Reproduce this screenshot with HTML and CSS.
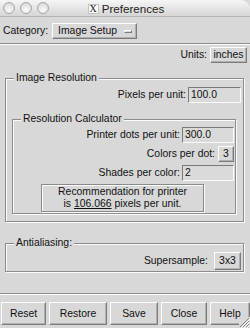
FILE: index.html
```html
<!DOCTYPE html>
<html>
<head>
<meta charset="utf-8">
<title>Preferences</title>
<link rel="stylesheet" href="styles.css">
</head>
<body>
<div class="window">
  <div class="titlebar">
    <div class="lights"><span class="light"></span><span class="light"></span><span class="light"></span></div>
    <div class="title"><span class="xlogo">X</span><span class="title-text">Preferences</span></div>
  </div>

  <div class="row category-row">
    <span class="label">Category:</span>
    <button class="btn option"><span>Image Setup</span><span class="indicator"></span></button>
  </div>

  <div class="sep"></div>

  <div class="row right units-row">
    <span class="label">Units:</span>
    <button class="btn units-btn">inches</button>
  </div>

  <fieldset class="group outer-group">
    <legend>Image Resolution</legend>
    <div class="row right field-row">
      <span class="label">Pixels per unit:</span>
      <span class="entry wide">100.0</span>
    </div>

    <fieldset class="group calc-group">
      <legend>Resolution Calculator</legend>
      <div class="row right field-row first">
        <span class="label">Printer dots per unit:</span>
        <span class="entry">300.0</span>
      </div>
      <div class="row right field-row">
        <span class="label">Colors per dot:</span>
        <button class="btn small-btn">3</button>
      </div>
      <div class="row right field-row">
        <span class="label">Shades per color:</span>
        <span class="entry">2</span>
      </div>
      <div class="recommend">
        <div>Recommendation for printer</div>
        <div>is <u>106.066</u> pixels per unit.</div>
      </div>
    </fieldset>
  </fieldset>

  <fieldset class="group aa-group">
    <legend>Antialiasing:</legend>
    <div class="row right field-row">
      <span class="label">Supersample:</span>
      <button class="btn ss-btn">3x3</button>
    </div>
  </fieldset>

  <div class="sep bottom-sep"></div>

  <div class="button-row">
    <button class="btn action b-reset">Reset</button>
    <button class="btn action b-restore">Restore</button>
    <button class="btn action b-save">Save</button>
    <button class="btn action b-close">Close</button>
    <button class="btn action b-help">Help</button>
  </div>

  <svg class="grip" width="11" height="11" viewBox="0 0 11 11">
    <path d="M10 1 L1 10 M10 4 L4 10 M10 7 L7 10" stroke="#8a8a8a" stroke-width="1"/>
    <path d="M11 2 L2 11 M11 5 L5 11 M11 8 L8 11" stroke="#ffffff" stroke-width="1"/>
  </svg>
</div>
</body>
</html>
```

FILE: styles.css
```css
html, body {
  margin: 0;
  padding: 0;
  background: #d8d8d8;
}

.window {
  position: relative;
  width: 250px;
  height: 328px;
  background: #d8d8d8;
  font-family: "Liberation Sans", Arial, Helvetica, sans-serif;
  font-size: 10.4px;
  line-height: 12px;
  color: #111;
  overflow: hidden;
  display: flex;
  flex-direction: column;
}

/* title bar */
.titlebar {
  position: relative;
  height: 16px;
  border-bottom: 1px solid #b4b4b4;
  background: linear-gradient(#f6f6f6, #e2e2e2 60%, #d6d6d6);
  border-top-right-radius: 9px;
  display: flex;
  align-items: center;
  justify-content: center;
}

.lights {
  position: absolute;
  left: 3px;
  top: 2px;
  display: flex;
  gap: 5px;
}

.light {
  width: 10px;
  height: 10px;
  border-radius: 50%;
  border: 1px solid #a6a6a6;
  background: radial-gradient(circle at 50% 70%, #fbfbfb, #dedede 70%, #cfcfcf);
}

.title {
  display: flex;
  align-items: center;
  gap: 3px;
  margin-left: 2px;
  margin-top: 1px;
}

.xlogo {
  width: 9px;
  height: 8px;
  border: 1px solid #c4c4c4;
  background: #fafafa;
  font-family: "Liberation Serif", "Times New Roman", serif;
  font-size: 10px;
  line-height: 8px;
  text-align: center;
  color: #222;
}

.title-text {
  font-size: 11.6px;
  color: #222;
}

/* rows */
.row {
  display: flex;
  align-items: center;
}

.row.right {
  justify-content: flex-end;
}

.label {
  white-space: nowrap;
}

.category-row {
  margin-top: 6px;
  height: 16px;
  padding-left: 3px;
  gap: 4px;
}

.sep {
  height: 1px;
  background: #8e8e8e;
  border-bottom: 1px solid #fbfbfb;
  margin-top: 4px;
}

.units-row {
  margin-top: 2px;
  height: 16px;
  padding-right: 3px;
  gap: 3px;
}

/* buttons */
.btn {
  font: inherit;
  color: inherit;
  margin: 0;
  padding: 0;
  background: #d8d8d8;
  border: 1px solid;
  border-color: #fdfdfd #7c7c7c #7c7c7c #fdfdfd;
  box-shadow: inset -1px -1px 0 #b0b0b0;
  height: 16px;
  line-height: 12px;
  text-align: center;
}

.option {
  width: 85px;
  display: flex;
  align-items: center;
  justify-content: space-between;
  padding: 0 4px 0 5px;
}

.indicator {
  width: 6px;
  height: 1px;
  border: 1px solid;
  border-color: #fdfdfd #7c7c7c #7c7c7c #fdfdfd;
}

.units-btn {
  width: 37px;
}

/* entries */
.entry {
  display: block;
  height: 14px;
  border: 1px solid;
  border-color: #7a7a7a #fbfbfb #fbfbfb #7a7a7a;
  background: #dadada;
  padding-left: 2px;
  line-height: 13px;
  box-sizing: content-box;
  width: 48px;
}

.entry.wide {
  width: 49px;
}

/* groups */
.group {
  margin: 0;
  padding: 0;
  min-width: 0;
  border: 1px solid #8c8c8c;
  box-shadow: inset 1px 1px 0 #fbfbfb, 1px 1px 0 #fbfbfb;
}

.group > legend {
  margin-left: 7px;
  padding: 0 2px;
  line-height: 12px;
  height: 12px;
  background: #d8d8d8;
}

.outer-group {
  margin: 9px 6px 0 5px;
  padding: 3px 2px 7px 1px;
}

.field-row {
  height: 16px;
  gap: 2px;
}

.calc-group {
  margin: 10px 5px 0 5px;
  padding: 2px 1px 1px 1px;
}

.calc-group .field-row {
  margin-top: 3px;
}

.calc-group .field-row.first {
  margin-top: 0;
}

.small-btn {
  width: 16px;
  margin-left: 1px;
}

.recommend {
  margin: 3px 0 0 27px;
  width: 161px;
  border: 1px solid #8a8a8a;
  box-shadow: 1px 1px 0 #fbfbfb, inset 1px 1px 0 #fbfbfb;
  text-align: center;
  padding: 1px 0 1px;
  line-height: 12px;
}

.aa-group {
  margin: 15px 6px 0 5px;
  padding: 3px 2px 1px 1px;
}

.aa-group .field-row {
  height: 18px;
}

.ss-btn {
  width: 27px;
  margin-left: 4px;
  height: 18px;
}

.bottom-sep {
  margin-top: 21px;
}

/* bottom buttons */
.button-row {
  margin-top: 7px;
  display: flex;
  gap: 3px;
  padding-left: 1px;
}

.action {
  height: 23px;
}

.b-reset { width: 45px; }
.b-restore { width: 58px; }
.b-save { width: 48px; }
.b-close { width: 46px; }
.b-help { width: 40px; }

.grip {
  position: absolute;
  right: 0;
  bottom: 0;
  background: #d8d8d8;
}
```
